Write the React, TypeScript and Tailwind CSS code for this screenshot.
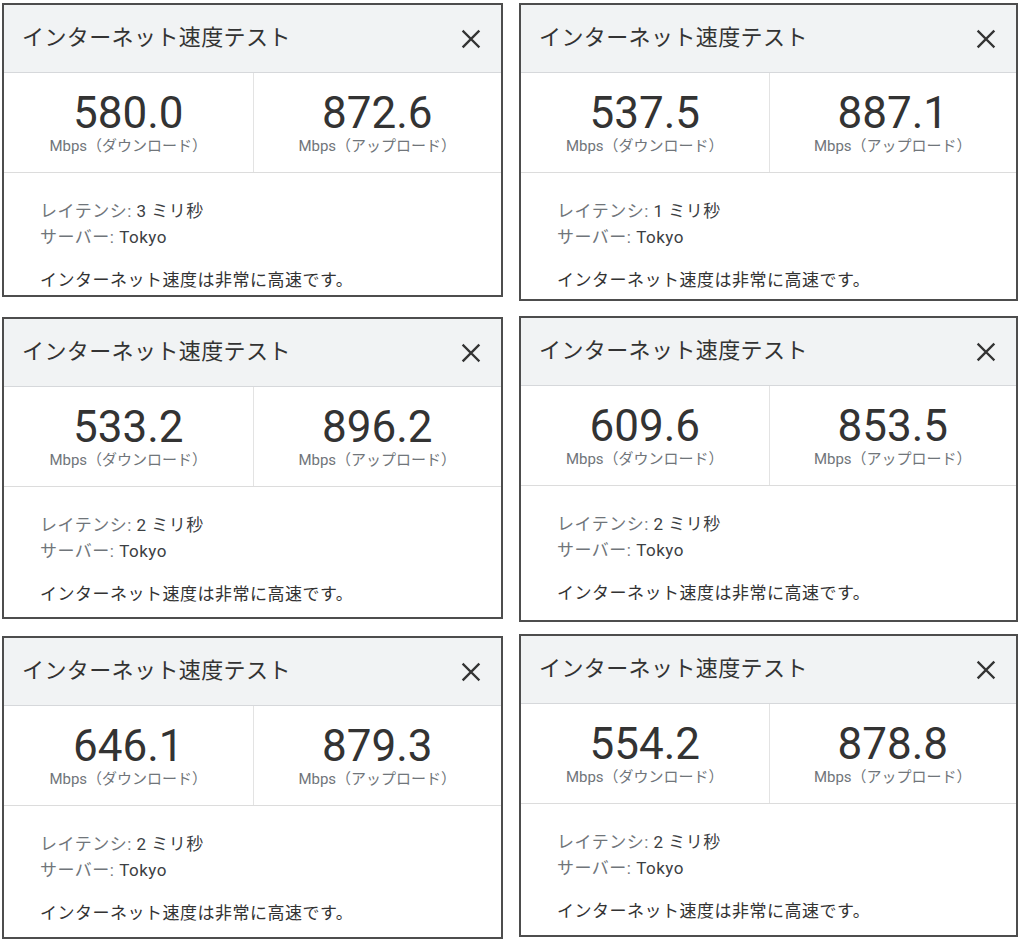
type Result = {
  down: string;
  up: string;
  latency: string;
  box: string;
};

const left: Result[] = [
  { down: "580.0", up: "872.6", latency: "3", box: "mt-[3px] h-[294px]" },
  { down: "533.2", up: "896.2", latency: "2", box: "mt-[20px] h-[302px]" },
  { down: "646.1", up: "879.3", latency: "2", box: "mt-[17px] h-[303px]" },
];

const right: Result[] = [
  { down: "537.5", up: "887.1", latency: "1", box: "mt-[3px] h-[298px]" },
  { down: "609.6", up: "853.5", latency: "2", box: "mt-[15px] h-[306px]" },
  { down: "554.2", up: "878.8", latency: "2", box: "mt-[12px] h-[303px]" },
];

function CloseIcon() {
  return (
    <svg width="20" height="20" viewBox="0 0 20 20" className="text-[#333]">
      <path d="M2.5 2.5 L17.5 17.5 M17.5 2.5 L2.5 17.5" stroke="currentColor" strokeWidth="2.4" strokeLinecap="square" />
    </svg>
  );
}

function Metric({ value, label, divider }: { value: string; label: string; divider?: boolean }) {
  return (
    <div className={`flex flex-col items-center justify-center ${divider ? "border-l border-[#e3e3e3]" : ""}`}>
      <div className="text-[44px] leading-[42px] text-[#333]">{value}</div>
      <div className="mt-[4px] text-[15px] leading-[16px] text-[#70757a]">{label}</div>
    </div>
  );
}

function SpeedCard({ r }: { r: Result }) {
  return (
    <div className={`flex flex-col border-2 border-[#4d4d4d] bg-white overflow-hidden ${r.box}`}>
      <div className="flex h-[68px] shrink-0 items-center justify-between border-b border-[#d6d8db] bg-[#f1f3f4] pl-[18px] pr-[20px]">
        <h2 className="pb-[2px] text-[22px] tracking-[0.4px] text-[#333]">インターネット速度テスト</h2>
        <CloseIcon />
      </div>
      <div className="grid h-[100px] shrink-0 grid-cols-2 border-b border-[#dcdcdc]">
        <Metric value={r.down} label="Mbps（ダウンロード）" />
        <Metric value={r.up} label="Mbps（アップロード）" divider />
      </div>
      <div className="pl-[36px] pt-[25px] text-[17px] leading-[26px] tracking-[0.5px]">
        <p>
          <span className="text-[#70757a]">レイテンシ: </span>
          <span className="text-[#3c4043]">{r.latency} ミリ秒</span>
        </p>
        <p>
          <span className="text-[#70757a]">サーバー: </span>
          <span className="text-[#3c4043]">Tokyo</span>
        </p>
        <p className="mt-[17px] text-[#333]">インターネット速度は非常に高速です。</p>
      </div>
    </div>
  );
}

export default function App() {
  return (
    <main
      className="flex h-[941px] w-[1024px] bg-white"
      style={{ fontFamily: 'Roboto, "Noto Sans CJK JP", sans-serif' }}
    >
      <div className="ml-[2px] flex w-[501px] flex-col">
        {left.map((r) => (
          <SpeedCard key={r.down} r={r} />
        ))}
      </div>
      <div className="ml-[16px] flex w-[499px] flex-col">
        {right.map((r) => (
          <SpeedCard key={r.down} r={r} />
        ))}
      </div>
    </main>
  );
}
